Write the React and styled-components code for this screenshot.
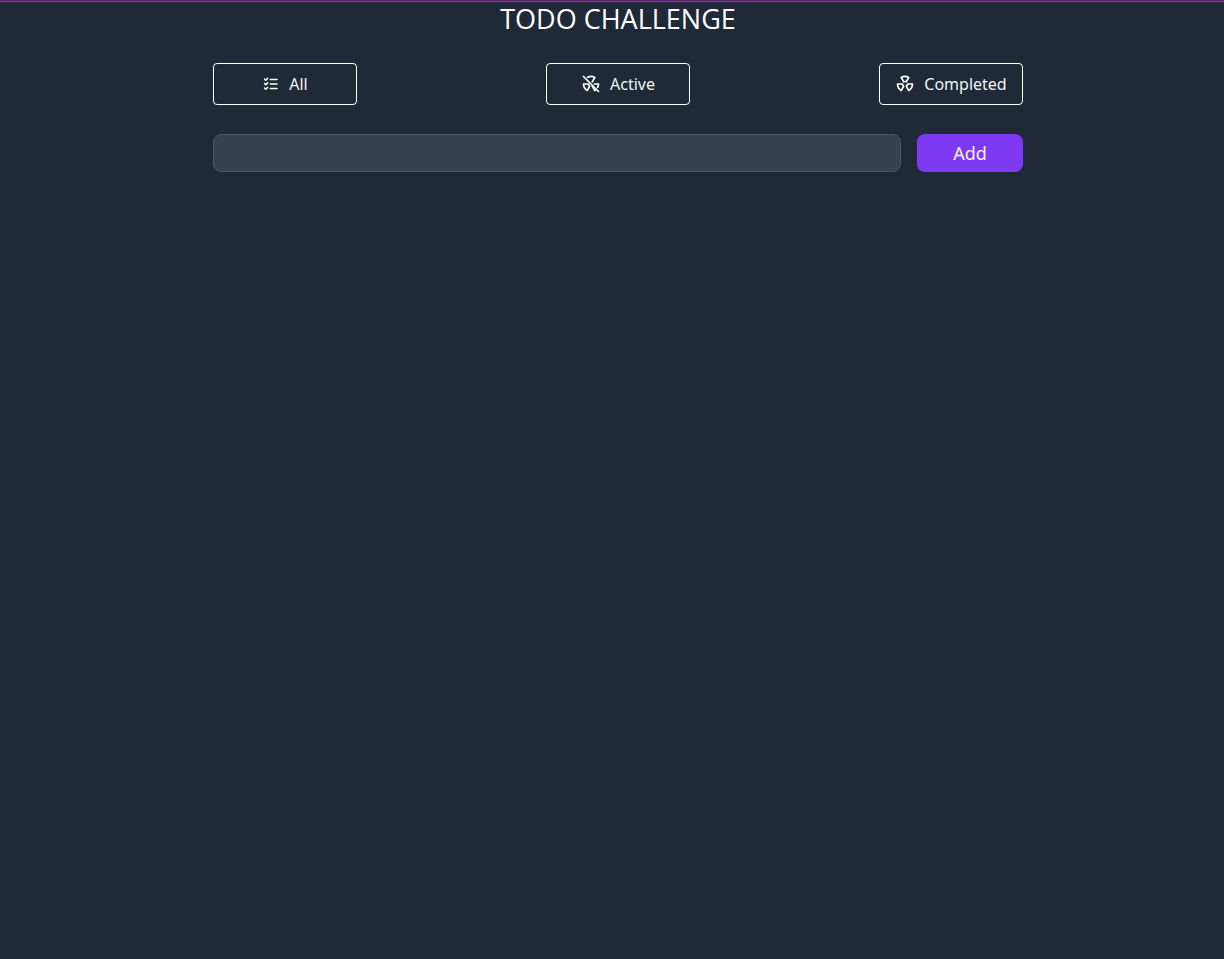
import React from "react";
import styled, { createGlobalStyle } from "styled-components";
import { TbListCheck, TbRadioactive, TbRadioactiveOff } from "react-icons/tb";

const GlobalStyle = createGlobalStyle`
  *, *::before, *::after { box-sizing: border-box; }
  body {
    margin: 0;
    background: #1f2937;
    color: #fff;
    font-family: "Open Sans", "Noto Sans", sans-serif;
  }
`;

const Page = styled.div`
  min-height: 100vh;
  padding: 2px 0 0 12px;
  box-shadow: inset 0 1px #5b2168, inset 0 2px #87408c;
`;

const Content = styled.main`
  width: 100%;
  max-width: 810px;
  margin: 0 auto;
`;

const Title = styled.h1`
  margin: 0 0 27px;
  font-size: 27px;
  line-height: 34px;
  font-weight: 400;
  text-align: center;
`;

const Filters = styled.nav`
  display: flex;
  justify-content: space-between;
  margin-bottom: 29px;
`;

const FilterButton = styled.button`
  display: flex;
  align-items: center;
  justify-content: center;
  gap: 9px;
  width: 144px;
  height: 42px;
  padding: 0;
  border: 1px solid #fff;
  border-radius: 4px;
  background: transparent;
  color: #f3f4f6;
  font-family: "Noto Sans", sans-serif;
  font-size: 16px;
  line-height: 24px;
  cursor: pointer;

  svg { color: #fff; }
`;

const TaskForm = styled.form`
  display: flex;
  gap: 16px;
`;

const TaskInput = styled.input`
  flex: 1;
  min-width: 0;
  height: 38px;
  padding: 0 10px;
  border: 1px solid #4b5563;
  border-radius: 8px;
  background: #374151;
  color: inherit;
  font: inherit;
`;

const AddButton = styled.button`
  width: 106px;
  height: 38px;
  padding: 0;
  border: 0;
  border-radius: 8px;
  background: #7e3af2;
  color: #f3f4f6;
  font-family: "Noto Sans", sans-serif;
  font-size: 18px;
  line-height: 28px;
  cursor: pointer;
`;

const filters = [
  { label: "All", Icon: TbListCheck, size: 18 },
  { label: "Active", Icon: TbRadioactiveOff, size: 20 },
  { label: "Completed", Icon: TbRadioactive, size: 20 },
];

export default function App() {
  return (
    <>
      <GlobalStyle />
      <Page>
        <Content>
          <Title>TODO CHALLENGE</Title>
          <Filters aria-label="Filter tasks">
            {filters.map(({ label, Icon, size }) => (
              <FilterButton key={label} type="button">
                <Icon size={size} aria-hidden="true" />
                {label}
              </FilterButton>
            ))}
          </Filters>
          <TaskForm onSubmit={(event) => event.preventDefault()}>
            <TaskInput type="text" aria-label="New task" />
            <AddButton type="submit">Add</AddButton>
          </TaskForm>
        </Content>
      </Page>
    </>
  );
}
